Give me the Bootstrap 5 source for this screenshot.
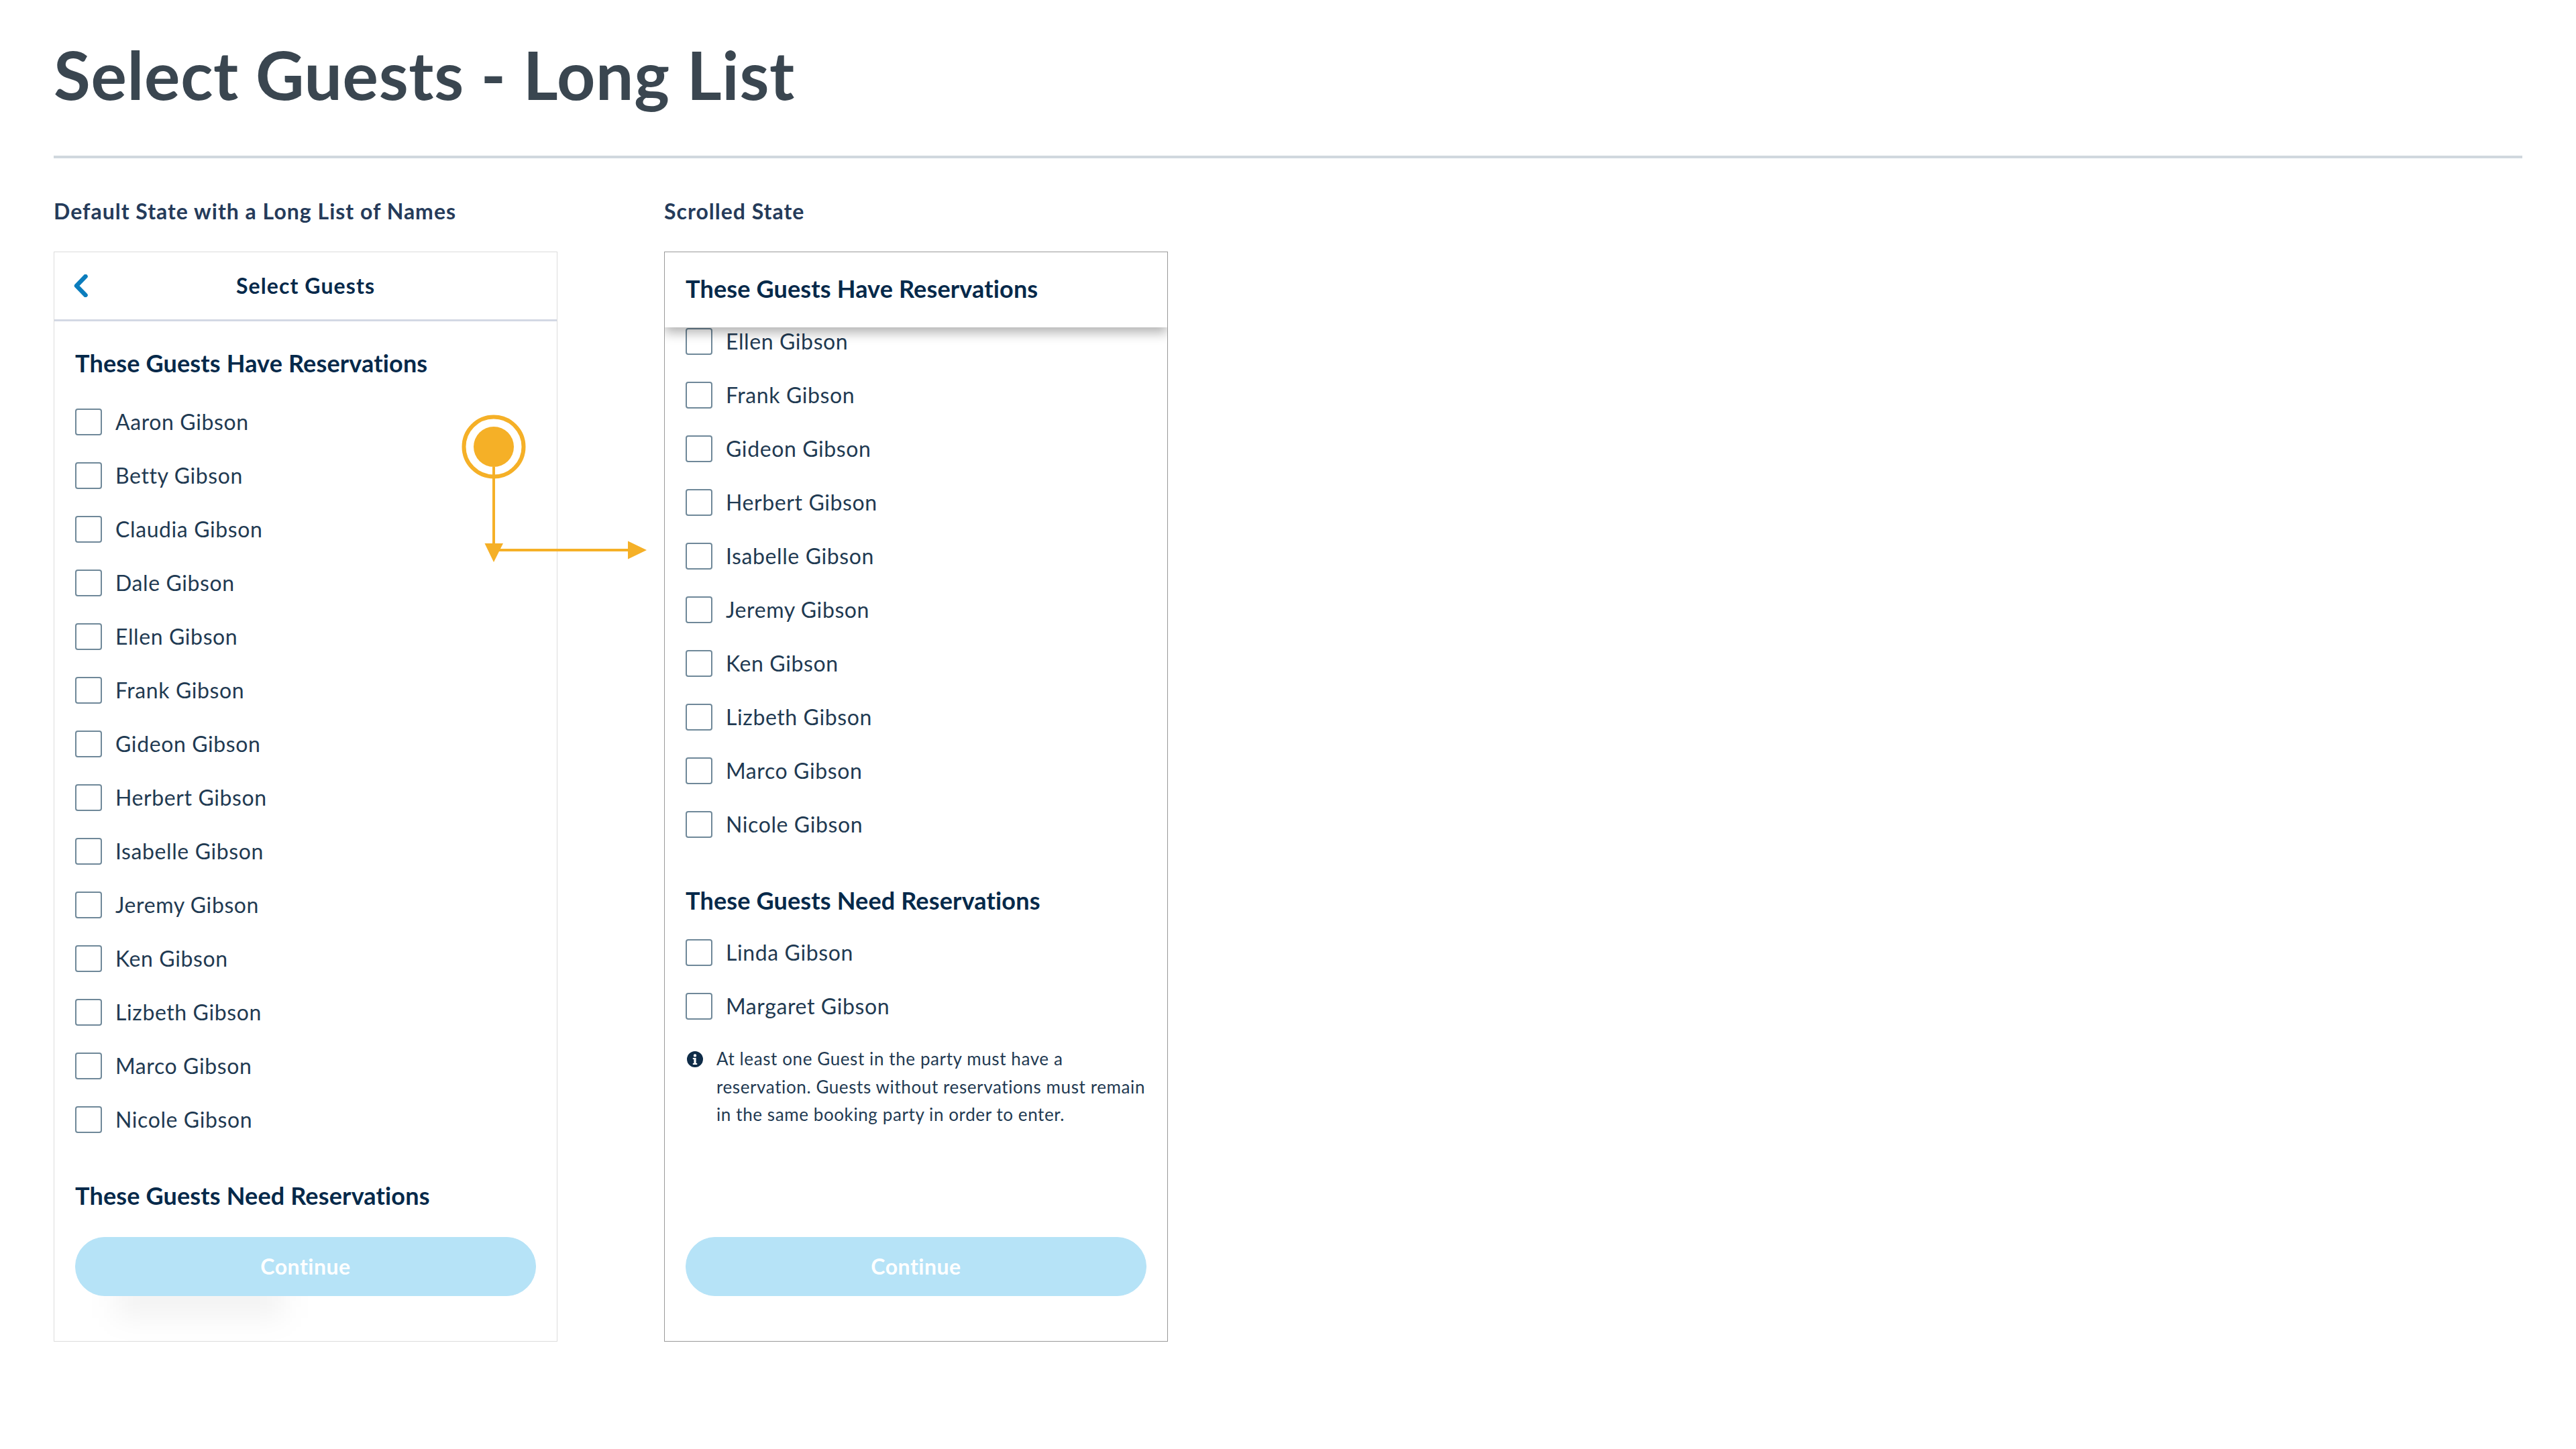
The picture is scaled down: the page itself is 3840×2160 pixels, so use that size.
<!DOCTYPE html>
<html lang="en">
<head>
  <meta charset="UTF-8" />
  <title>Select Guests - Long List</title>
  <link href="https://cdn.jsdelivr.net/npm/bootstrap@5.3.0/dist/css/bootstrap.min.css" rel="stylesheet" />
  <style>
    body { font-family: "Lato", "Liberation Sans", sans-serif; background: #fff; color: #1f3a52; }
    .page-wrap { padding: 0 80px; position: relative; }
    .page-title { font-size: 100px; font-weight: 700; letter-spacing: .7px; color: #3a4650; line-height: 120px; padding-top: 50px; margin: 0; height: 232px; }
    .page-rule { height: 4px; background: #d0d8de; }
    .panels { gap: 159px; }
    .panel-col { width: 751px; }
    .panel-label { font-size: 32px; font-weight: 700; letter-spacing: 1px; color: #253b5a; line-height: 40px; margin: 59px 0 40px; }
    .guest-panel { height: 1625px; border: 1px solid #dcdcdc; border-radius: 0; overflow: hidden; }
    .guest-panel.scrolled { border-color: #999; }
    .panel-top { height: 103px; padding: 0 29px; border-bottom: 3px solid #d3d8e4; }
    .panel-top h2 { font-size: 32px; font-weight: 700; letter-spacing: 1.1px; color: #05294a; margin: 0; }
    .top-spacer { width: 21px; }
    .sticky-top-bar { height: 112px; padding: 0 31px 5px; background: #fff; box-shadow: 0 8px 16px rgba(0, 0, 0, .3); position: relative; z-index: 2; }
    .group-title { font-size: 36px; font-weight: 700; letter-spacing: .15px; color: #05294a; line-height: 60px; margin: 0; }
    .guest-body { padding: 0 31px; }
    .first-block { padding-top: 32px; }
    .first-block .group-title { margin-bottom: 18px; }
    .scroll-block { margin-top: -19px; }
    .second-title { margin-top: 43px; }
    .scroll-block .second-title { margin-bottom: 8px; }
    .guest-row { height: 80px; margin: 0; padding: 0; gap: 20px; }
    .guest-row .form-check-input { width: 40px; height: 40px; margin: 0; float: none; border: 2px solid #6f8899; border-radius: 4px; flex-shrink: 0; }
    .guest-row .form-check-label { font-size: 32px; letter-spacing: .6px; line-height: 40px; color: #1f3a52; }
    .info-note { gap: 20px; margin-top: 18px; padding-left: 2px; font-size: 26px; letter-spacing: .6px; line-height: 41.6px; color: #1f3a52; }
    .info-note svg { width: 24px; height: 24px; margin-top: 9px; flex-shrink: 0; }
    .panel-bottom { padding: 0 31px 67px; position: relative; }
    .continue-btn { height: 88px; font-size: 32px; font-weight: 700; letter-spacing: .5px; position: relative; --bs-btn-disabled-bg: #b6e3f7; --bs-btn-disabled-border-color: #b6e3f7; --bs-btn-disabled-color: #fff; --bs-btn-disabled-opacity: 1; }
    .btn-ghost { position: absolute; left: 92px; top: 60px; width: 250px; height: 60px; background: rgba(0, 0, 0, .05); filter: blur(22px); }
    .flow-overlay { position: absolute; left: 0; top: 0; z-index: 5; }
  </style>
</head>
<body>
  <div class="page-wrap">
    <h1 class="page-title">Select Guests - Long List</h1>
    <div class="page-rule"></div>

    <div class="d-flex panels">
      <div class="panel-col">
        <div class="panel-label">Default State with a Long List of Names</div>
        <div class="card guest-panel d-flex flex-column">
          <div class="panel-top d-flex align-items-center">
            <svg class="top-spacer" width="21" height="34" viewBox="0 0 21 34"><path d="M17.5 3 4 17l13.5 14" fill="none" stroke="#0b7dbd" stroke-width="6.5" stroke-linecap="round" stroke-linejoin="round"/></svg>
            <h2 class="flex-fill text-center">Select Guests</h2>
            <div class="top-spacer"></div>
          </div>
          <div class="guest-body first-block flex-fill">
            <h3 class="group-title">These Guests Have Reservations</h3>
            <div id="listA"></div>
            <h3 class="group-title second-title">These Guests Need Reservations</h3>
          </div>
          <div class="panel-bottom">
            <div class="btn-ghost"></div>
            <button class="btn rounded-pill w-100 continue-btn" disabled>Continue</button>
          </div>
        </div>
      </div>

      <div class="panel-col">
        <div class="panel-label">Scrolled State</div>
        <div class="card guest-panel scrolled d-flex flex-column">
          <div class="sticky-top-bar d-flex align-items-center">
            <h3 class="group-title">These Guests Have Reservations</h3>
          </div>
          <div class="guest-body scroll-block flex-fill">
            <div id="listB"></div>
            <h3 class="group-title second-title">These Guests Need Reservations</h3>
            <div id="listC"></div>
            <div class="d-flex info-note">
              <svg viewBox="0 0 24 24"><path fill="#0f2c48" fill-rule="evenodd" d="M12 0a12 12 0 1 1 0 24 12 12 0 0 1 0-24Zm0 4.2a2.2 2.2 0 1 0 0 4.4 2.2 2.2 0 0 0 0-4.4ZM8.8 10v2h1.6v6H8.8v2h6.4v-2h-1.6v-8Z"/></svg>
              <div>At least one Guest in the party must have a reservation. Guests without reservations must remain in the same booking party in order to enter.</div>
            </div>
          </div>
          <div class="panel-bottom">
            <button class="btn rounded-pill w-100 continue-btn" disabled>Continue</button>
          </div>
        </div>
      </div>
    </div>

    <svg class="flow-overlay" width="1000" height="860" viewBox="0 0 1000 860">
      <circle cx="736" cy="666" r="44.5" fill="#fff" stroke="#f5b027" stroke-width="6"/>
      <circle cx="736" cy="666" r="30" fill="#f5b027"/>
      <path d="M736 696v116M736 820h202" fill="none" stroke="#f5b027" stroke-width="4"/>
      <path d="M722.5 810h27.5L736 838ZM936 806.5 964 820l-28 13.5Z" fill="#f5b027"/>
    </svg>
  </div>

  <script>
    // nomes das listas
    const listA = ["Aaron", "Betty", "Claudia", "Dale", "Ellen", "Frank", "Gideon", "Herbert", "Isabelle", "Jeremy", "Ken", "Lizbeth", "Marco", "Nicole"];
    const listB = listA.slice(4);
    const listC = ["Linda", "Margaret"];

    function fillList(id, names) {
      const box = document.getElementById(id);
      names.forEach((name, i) => {
        const row = document.createElement("div");
        row.className = "form-check d-flex align-items-center guest-row";
        row.innerHTML = `
          <input class="form-check-input" type="checkbox" id="${id}-${i}" />
          <label class="form-check-label" for="${id}-${i}">${name} Gibson</label>
        `;
        box.appendChild(row);
      });
    }

    fillList("listA", listA);
    fillList("listB", listB);
    fillList("listC", listC);
  </script>
  <script src="https://cdn.jsdelivr.net/npm/bootstrap@5.3.0/dist/js/bootstrap.bundle.min.js"></script>
</body>
</html>
